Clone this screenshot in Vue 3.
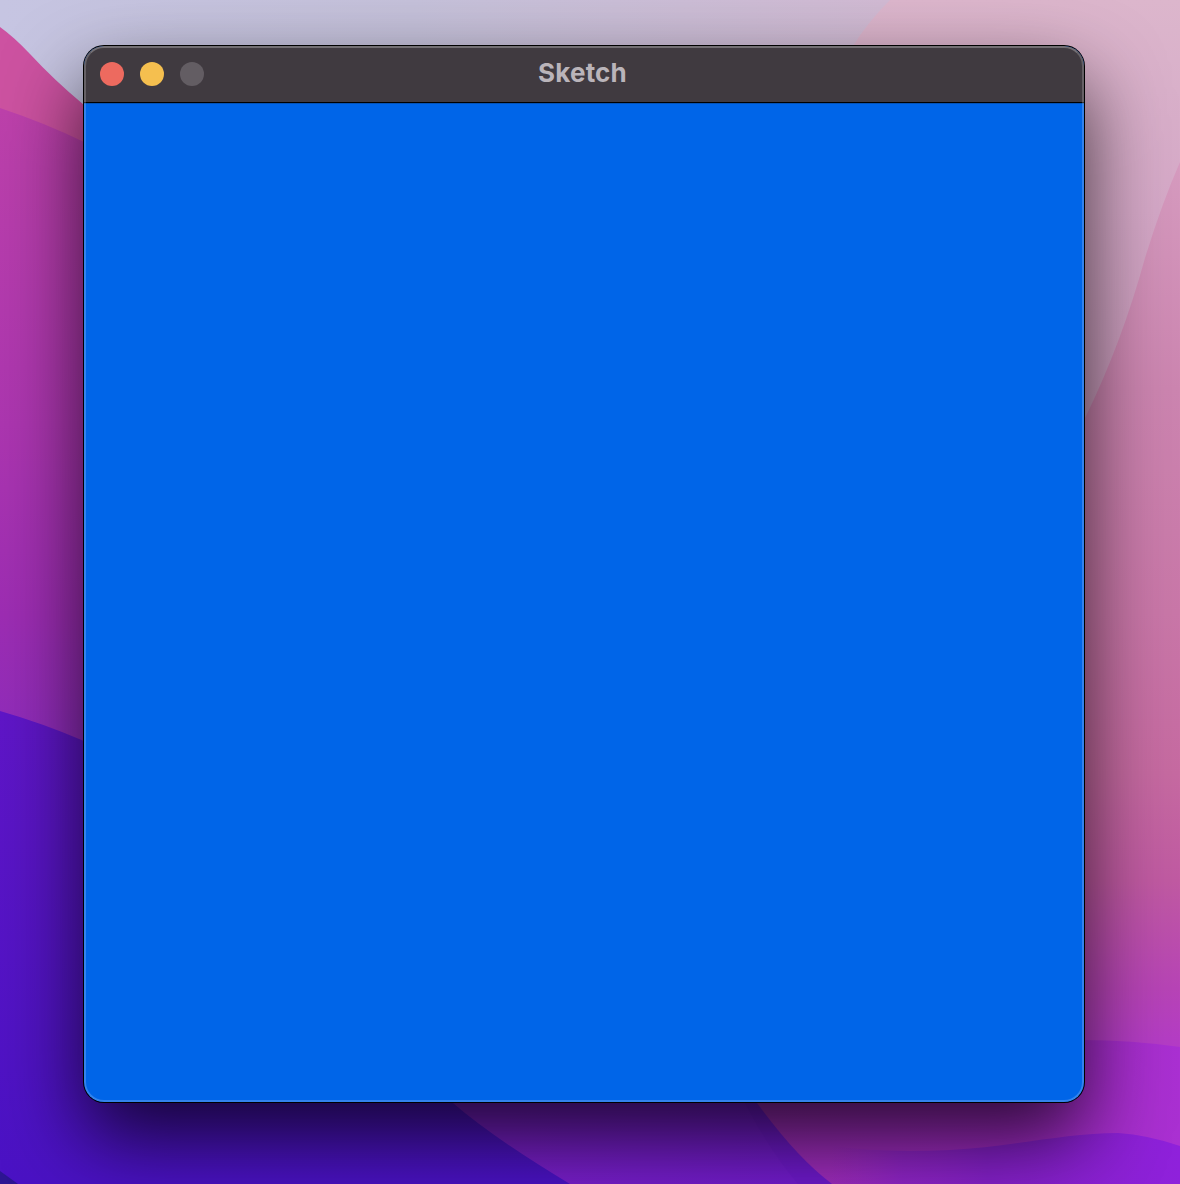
<script setup>
const controls = ['close', 'minimize', 'zoom']
</script>

<template>
  <main class="desktop">
    <svg class="wallpaper" viewBox="0 0 1180 1184" aria-hidden="true">
      <defs>
        <linearGradient id="sky" x1="0" y1="0" x2="1" y2="0">
          <stop offset="0" stop-color="#c6c5e2" />
          <stop offset=".35" stop-color="#c5c1da" />
          <stop offset=".75" stop-color="#d1bad3" />
        </linearGradient>
        <linearGradient id="blush" gradientUnits="userSpaceOnUse" x1="0" y1="0" x2="0" y2="420">
          <stop offset="0" stop-color="#dcb6cc" />
          <stop offset=".5" stop-color="#d5a8c7" />
          <stop offset="1" stop-color="#c99abb" />
        </linearGradient>
        <linearGradient id="rose" gradientUnits="userSpaceOnUse" x1="0" y1="165" x2="0" y2="1060">
          <stop offset="0" stop-color="#d69bbf" />
          <stop offset=".25" stop-color="#cc85b0" />
          <stop offset=".5" stop-color="#c977a8" />
          <stop offset=".68" stop-color="#c66aa1" />
          <stop offset=".8" stop-color="#c05aa2" />
          <stop offset=".92" stop-color="#b744b6" />
          <stop offset="1" stop-color="#b33aca" />
        </linearGradient>
        <linearGradient id="magenta" gradientUnits="userSpaceOnUse" x1="0" y1="110" x2="0" y2="740">
          <stop offset="0" stop-color="#bd41ab" />
          <stop offset=".5" stop-color="#ac36b0" />
          <stop offset=".8" stop-color="#9d2db3" />
          <stop offset="1" stop-color="#8f2cbb" />
        </linearGradient>
        <linearGradient id="indigo" gradientUnits="userSpaceOnUse" x1="0" y1="711" x2="0" y2="1184">
          <stop offset="0" stop-color="#5f16c7" />
          <stop offset="1" stop-color="#4a12c4" />
        </linearGradient>
        <linearGradient id="violet" gradientUnits="userSpaceOnUse" x1="500" y1="0" x2="800" y2="0">
          <stop offset="0" stop-color="#7a1fca" />
          <stop offset="1" stop-color="#711bcc" />
        </linearGradient>
        <linearGradient id="orchid" gradientUnits="userSpaceOnUse" x1="760" y1="0" x2="1180" y2="0">
          <stop offset="0" stop-color="#9c2cb8" />
          <stop offset=".6" stop-color="#a02ac4" />
          <stop offset="1" stop-color="#aa30d2" />
        </linearGradient>
        <linearGradient id="grape" gradientUnits="userSpaceOnUse" x1="830" y1="0" x2="1180" y2="0">
          <stop offset="0" stop-color="#9024c6" stop-opacity="0" />
          <stop offset=".2" stop-color="#8a22c8" stop-opacity=".75" />
          <stop offset=".45" stop-color="#8520c9" />
          <stop offset="1" stop-color="#8f21db" />
        </linearGradient>
      </defs>
      <rect width="1180" height="1184" fill="url(#sky)" />
      <path d="M890 0Q867 23 853 46L853 500H1180V0Z" fill="url(#blush)" />
      <path d="M1180 162Q1162 203 1145 258Q1122 342 1086 416L1000 560V1120H1180Z" fill="url(#rose)" />
      <path d="M0 27Q14 37 30 54Q54 80 84 105H200V300H0Z" fill="#cd52a1" />
      <path d="M0 108Q45 123 84 142H200V800H0Z" fill="url(#magenta)" />
      <path d="M400 1080H870V1184H400Z" fill="url(#violet)" />
      <path d="M0 711Q42 723 84 741L453 1103Q492 1137 570 1184H0Z" fill="url(#indigo)" />
      <path d="M1000 1045Q1090 1034 1180 1047V1184H832Q797 1158 757 1103L740 1080H1000Z" fill="url(#orchid)" />
      <path d="M757 1103Q797 1158 832 1184H798Q768 1148 745 1103Z" fill="#6818c3" opacity=".35" />
      <path d="M832 1146Q880 1153 950 1150C1010 1147 1065 1133 1118 1133Q1148 1135 1180 1146V1184H832Z" fill="url(#grape)" />
      <path d="M0 1171L18 1184H0Z" fill="#2d1592" />
    </svg>

    <section class="window">
      <header class="titlebar">
        <div class="controls">
          <span v-for="control in controls" :key="control" class="control" :class="control" />
        </div>
        <h1 class="title">Sketch</h1>
      </header>
      <div class="canvas" />
    </section>
  </main>
</template>

<style>
body {
  margin: 0;
}
</style>

<style scoped>
.desktop {
  position: relative;
  box-sizing: border-box;
  width: 1180px;
  height: 1184px;
  padding: 46px 96px 82px 84px;
  overflow: hidden;
}

.wallpaper {
  position: absolute;
  inset: 0;
  width: 100%;
  height: 100%;
}

.window {
  position: relative;
  display: flex;
  flex-direction: column;
  width: 1000px;
  height: 1056px;
  border-radius: 20px;
  overflow: hidden;
  background: #0065e8;
  box-shadow: 0 0 0 1px #000, 0 36px 80px rgba(0, 0, 0, 0.74);
}

.window::after {
  content: '';
  position: absolute;
  inset: 0;
  border-radius: inherit;
  border: 2px solid rgba(255, 255, 255, 0.2);
  border-top-color: rgba(255, 255, 255, 0.27);
  pointer-events: none;
}

.titlebar {
  display: grid;
  grid-template-columns: 120px 1fr 123px;
  align-items: center;
  height: 56px;
  background: #403a40;
}

.controls {
  display: flex;
  gap: 16px;
  padding-left: 16px;
}

.control {
  width: 24px;
  height: 24px;
  border-radius: 50%;
}

.close {
  background: #ed6a5f;
}

.minimize {
  background: #f5bf4f;
}

.zoom {
  background: #635d63;
}

.title {
  margin: 0;
  padding-bottom: 2px;
  color: #bab4ba;
  font: 700 26px/30px Inter, sans-serif;
  letter-spacing: 0.2px;
  text-align: center;
}

.canvas {
  flex: 1;
  border-top: 1px solid #000;
  box-shadow: inset 0 1px #0454b9;
}
</style>
